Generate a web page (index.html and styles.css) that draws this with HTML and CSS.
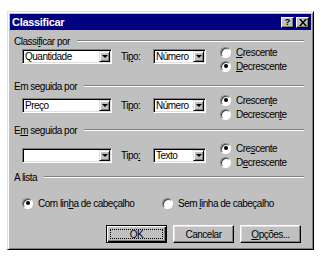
FILE: index.html
```html
<!DOCTYPE html>
<html>
<head>
    <title>Classificar</title>
    <link rel="stylesheet" href="styles.css">
</head>
<body>
<div class="dialog">
    <div class="titlebar">
        <span class="title">Classificar</span>
        <div class="tbtns">
            <span class="tbtn help">?</span>
            <span class="tbtn close">
                <svg width="8" height="7" viewBox="0 0 8 7"><path d="M0 0h2l2 2.5 2-2.5h2l-3 3.5 3 3.5h-2l-2-2.5-2 2.5h-2l3-3.5z" fill="#000"/></svg>
            </span>
        </div>
    </div>

    <div class="content">
        <!-- primeira chave -->
        <div class="group-head g1"><span>Classi<u>f</u>icar por</span><i class="rule"></i></div>
        <div class="row">
            <div class="fields f1">
                <div class="combo wide"><span class="val">Quantidade</span><span class="arrow"></span></div>
                <span class="lbl">Ti<u>p</u>o:</span>
                <div class="combo narrow"><span class="val">Número</span><span class="arrow"></span></div>
            </div>
            <div class="radios r1">
                <div class="radio"><span class="dot"></span><span><u>C</u>rescente</span></div>
                <div class="radio"><span class="dot on"></span><span><u>D</u>ecrescente</span></div>
            </div>
        </div>

        <!-- segunda chave -->
        <div class="group-head g2"><span>Em seguida por</span><i class="rule"></i></div>
        <div class="row">
            <div class="fields f2">
                <div class="combo wide"><span class="val">Preço</span><span class="arrow"></span></div>
                <span class="lbl">Ti<u>p</u>o:</span>
                <div class="combo narrow"><span class="val">Número</span><span class="arrow"></span></div>
            </div>
            <div class="radios r2">
                <div class="radio"><span class="dot on"></span><span>Crescen<u>t</u>e</span></div>
                <div class="radio"><span class="dot"></span><span>Decrescen<u>t</u>e</span></div>
            </div>
        </div>

        <!-- terceira chave -->
        <div class="group-head g3"><span>E<u>m</u> seguida por</span><i class="rule"></i></div>
        <div class="row">
            <div class="fields f3">
                <div class="combo wide"><span class="val"></span><span class="arrow"></span></div>
                <span class="lbl">Tipo<u>:</u></span>
                <div class="combo narrow"><span class="val">Texto</span><span class="arrow"></span></div>
            </div>
            <div class="radios r3">
                <div class="radio"><span class="dot on"></span><span>Cre<u>s</u>cente</span></div>
                <div class="radio"><span class="dot"></span><span>D<u>e</u>crescente</span></div>
            </div>
        </div>

        <!-- lista -->
        <div class="group-head g4"><span>A lista</span><i class="rule"></i></div>
        <div class="opts">
            <div class="radio first"><span class="dot on"></span><span>Com lin<u>h</u>a de cabeçalho</span></div>
            <div class="radio"><span class="dot"></span><span>Sem <u>l</u>inha de cabeçalho</span></div>
        </div>

        <div class="actions">
            <button class="btn default"><span class="focus">OK</span></button>
            <button class="btn">Cancelar</button>
            <button class="btn"><u>O</u>pções...</button>
        </div>
    </div>
</div>
</body>
</html>
```

FILE: styles.css
```css
body {
    margin: 0;
    background: #fff;
    font-family: "Liberation Sans", Arial, sans-serif;
    font-size: 10px;
    letter-spacing: -0.5px;
    color: #000;
}

u {
    text-decoration: underline;
    text-underline-offset: 1px;
}

.dialog {
    margin: 11px 0 0 7px;
    width: 307px;
    height: 239px;
    box-sizing: border-box;
    background: #c0c0c0;
    border: 1px solid;
    border-color: #dfdfdf #000 #000 #dfdfdf;
    box-shadow: inset 1px 1px #fff, inset -1px -1px #808080;
    padding: 2px;
}

.titlebar {
    height: 16px;
    background: #000080;
    color: #fff;
    display: flex;
    align-items: center;
    padding: 0 2px 0 2px;
}

.title {
    font-weight: bold;
    font-size: 11px;
    letter-spacing: -0.3px;
}

.tbtns {
    margin-left: auto;
    display: flex;
    gap: 2px;
}

.tbtn {
    width: 13px;
    height: 11px;
    box-sizing: border-box;
    background: #c0c0c0;
    border: 1px solid;
    border-color: #fff #000 #000 #fff;
    box-shadow: inset -1px -1px #808080;
    color: #000;
    display: flex;
    align-items: center;
    justify-content: center;
}

.help {
    font-weight: bold;
    font-size: 9px;
    letter-spacing: 0;
}

.content {
    padding: 0 7px 0 4px;
}

/* cabeçalhos de grupo */
.group-head {
    display: flex;
    align-items: center;
    gap: 7px;
    height: 12px;
}

.rule {
    flex: 1;
    height: 0;
    border-top: 1px solid #808080;
    border-bottom: 1px solid #fff;
}

.g1 { margin-top: 5px; }
.g2 { margin-top: 7px; }
.g3 { margin-top: 3px; }
.g4 { margin-top: 2px; }

.row {
    display: flex;
    align-items: flex-start;
    padding-left: 8px;
}

.fields {
    display: flex;
    align-items: center;
}

.f1 { margin-top: 2px; }
.f2 { margin-top: 6px; }
.f3 { margin-top: 12px; }

.lbl {
    width: 32px;
    margin-left: 9px;
}

/* caixas de combinação */
.combo {
    height: 15px;
    box-sizing: border-box;
    background: #fff;
    border: 1px solid;
    border-color: #808080 #fff #fff #808080;
    box-shadow: inset 1px 1px #000, inset -1px -1px #dfdfdf;
    display: flex;
    padding: 1px;
}

.wide { width: 90px; }
.narrow { width: 53px; }

.val {
    flex: 1;
    padding-left: 1px;
    line-height: 12px;
    white-space: nowrap;
    overflow: hidden;
}

.arrow {
    width: 11px;
    box-sizing: border-box;
    background: #c0c0c0;
    border: 1px solid;
    border-color: #dfdfdf #000 #000 #dfdfdf;
    box-shadow: inset 1px 1px #fff, inset -1px -1px #808080;
    display: flex;
    align-items: center;
    justify-content: center;
}

.arrow::after {
    content: "";
    border-left: 3px solid transparent;
    border-right: 3px solid transparent;
    border-top: 3px solid #000;
}

/* botões de opção */
.radios {
    margin-left: 14px;
}

.r1 { margin-top: -2px; }
.r2 { margin-top: 1px; }
.r3 { margin-top: 5px; }

.radio {
    display: flex;
    align-items: center;
    gap: 5px;
    height: 14px;
    white-space: nowrap;
}

.dot {
    width: 11px;
    height: 11px;
    box-sizing: border-box;
    border-radius: 50%;
    border: 1px solid;
    border-color: #808080 #fff #fff #808080;
    box-shadow: inset 1px 1px #404040;
    background: #fff;
    display: flex;
    align-items: center;
    justify-content: center;
}

.dot.on::after {
    content: "";
    width: 4px;
    height: 4px;
    border-radius: 50%;
    background: #000;
}

.opts {
    display: flex;
    margin-top: 13px;
    padding-left: 8px;
}

.opts .first {
    width: 140px;
}

/* botões */
.actions {
    display: flex;
    justify-content: flex-end;
    gap: 6px;
    margin-top: 15px;
    padding-right: 3px;
}

.btn {
    width: 61px;
    height: 18px;
    box-sizing: border-box;
    padding: 0;
    font: inherit;
    letter-spacing: inherit;
    color: #000;
    background: #c0c0c0;
    border: 1px solid;
    border-color: #fff #000 #000 #fff;
    box-shadow: inset -1px -1px #808080, inset 1px 1px #dfdfdf;
}

.btn.default {
    border: 1px solid #000;
    box-shadow: inset 1px 1px #fff, inset -1px -1px #000, inset -2px -2px #808080;
    padding: 3px;
}

.focus {
    display: flex;
    height: 100%;
    align-items: center;
    justify-content: center;
    outline: 1px dotted #000;
    outline-offset: -1px;
}
```
